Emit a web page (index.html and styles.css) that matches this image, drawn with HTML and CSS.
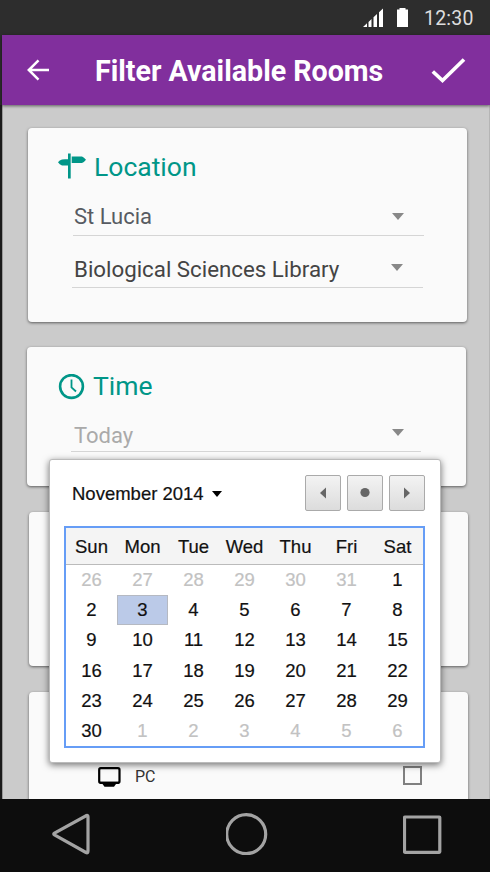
FILE: index.html
```html
<!DOCTYPE html>
<html lang="en">
<head>
<meta charset="utf-8">
<title>Filter Available Rooms</title>
<link rel="stylesheet" href="styles.css">
</head>
<body>
<div class="phone">
  <header class="status">
    <svg class="signal" width="21" height="19" viewBox="0 0 21 19"><path d="M0 19L4 15.200V19zM5.500 13.900L8.500 11V19H5.500zM10.500 9.300L14 6V19H10.500zM16 4.200L20 0.500V19H16z"/></svg>
    <svg class="battery" width="11" height="19" viewBox="0 0 11 19"><path d="M2.5 0H8.5V1.5H11V19H0V1.5H2.5z"/></svg>
    <span class="clock">12:30</span>
  </header>
  <div class="appbar">
    <svg class="back" width="22" height="22" viewBox="0 0 22 22"><path d="M22 11H2M11.5 1.3L1.8 11L11.5 20.7"/></svg>
    <h1 class="title">Filter Available Rooms</h1>
    <svg class="check" width="35" height="26" viewBox="0 0 35 26"><path d="M1.800 13.500L11.500 22.500L33 1.500"/></svg>
  </div>
  <main class="content">
    <section class="card location">
      <h2 class="heading">
        <svg class="sign-icon" width="28" height="26" viewBox="0 0 28 26"><path d="M10 0.500H12.700V25.500H10zM10 6V12.500H4Q1.500 11.500 0 9.300Q1.500 7.300 4 6.500zM13.700 3.500H24Q26 4.200 28 6.700Q26 9.300 24 10H13.700z"/></svg>
        <span class="location-label">Location</span>
      </h2>
      <div class="select campus"><span>St Lucia</span><i class="caret"></i></div>
      <div class="select building"><span>Biological Sciences Library</span><i class="caret"></i></div>
    </section>
    <section class="card time">
      <h2 class="heading">
        <svg class="clock-icon" width="28" height="26" viewBox="0 0 28 26"><circle cx="13.500" cy="12.500" r="11.400"/><path d="M13.500 5.500V13.300L18 17.500"/></svg>
        <span class="time-label">Time</span>
      </h2>
      <div class="select day"><span>Today</span><i class="caret"></i></div>
    </section>
    <section class="card middle"></section>
    <section class="card equipment">
      <label class="option">
        <svg width="23" height="20" viewBox="0 0 23 20"><rect x="1.200" y="1.200" width="20.300" height="14.600" rx="1.500"/><path d="M1 14.800H22L20.500 17H18L16 19.700H6.500L4.500 17H2.500z"/></svg>
        <span>PC</span><i class="checkbox"></i>
      </label>
    </section>
    <div class="picker">
      <div class="picker-head">
        <span class="month">November 2014</span><i class="month-caret"></i>
        <div class="buttons">
          <button><svg width="8" height="12" viewBox="0 0 8 12"><path d="M7 0.500V11.500L1 6z"/></svg></button>
          <button><svg width="10" height="12" viewBox="0 0 10 12"><circle cx="5" cy="5.500" r="4.600"/></svg></button>
          <button><svg width="8" height="12" viewBox="0 0 8 12"><path d="M1 0.500V11.500L7 6z"/></svg></button>
        </div>
      </div>
      <table class="days">
        <thead><tr><th>Sun</th><th>Mon</th><th>Tue</th><th>Wed</th><th>Thu</th><th>Fri</th><th>Sat</th></tr></thead>
        <tbody>
          <tr><td class="out">26</td><td class="out">27</td><td class="out">28</td><td class="out">29</td><td class="out">30</td><td class="out">31</td><td>1</td></tr>
          <tr><td>2</td><td class="selected">3</td><td>4</td><td>5</td><td>6</td><td>7</td><td>8</td></tr>
          <tr><td>9</td><td>10</td><td>11</td><td>12</td><td>13</td><td>14</td><td>15</td></tr>
          <tr><td>16</td><td>17</td><td>18</td><td>19</td><td>20</td><td>21</td><td>22</td></tr>
          <tr><td>23</td><td>24</td><td>25</td><td>26</td><td>27</td><td>28</td><td>29</td></tr>
          <tr><td>30</td><td class="out">1</td><td class="out">2</td><td class="out">3</td><td class="out">4</td><td class="out">5</td><td class="out">6</td></tr>
        </tbody>
      </table>
    </div>
  </main>
  <nav class="nav">
    <svg width="38" height="42" viewBox="0 0 38 42"><path d="M34.500 2.500Q36 2 36 4V38Q36 40.500 34 39.500L2.500 22Q1 21 2.500 20z"/></svg>
    <svg width="42" height="42" viewBox="0 0 42 42"><circle cx="20.200" cy="21.200" r="19.500"/></svg>
    <svg width="39" height="39" viewBox="0 0 39 39"><rect x="1.500" y="2" width="35.300" height="35.300" rx="0.500"/></svg>
  </nav>
</div>
</body>
</html>
```
FILE: styles.css
```css
* { box-sizing: border-box; }
body { margin: 0; background: #2d2d2d; font-family: Roboto, "Liberation Sans", sans-serif; }
svg { display: block; flex: none; }
.phone { width: 490px; height: 872px; display: flex; flex-direction: column; overflow: hidden; }

.status { height: 35px; flex: none; display: flex; padding: 8px 16px 0 0; justify-content: flex-end; background: #2d2d2d; }
.status svg { fill: #fff; }
.signal { margin-right: 13px; }
.battery { margin-right: 16px; }
.clock { width: 50px; font-size: 19.500px; line-height: 22px; letter-spacing: 0.200px; white-space: nowrap; color: #ddd; }

.appbar { position: relative; z-index: 1; height: 70px; flex: none; margin-left: 2px; display: flex; align-items: center; background: #812f9d; box-shadow: 0 1px 3px rgba(0,0,0,.55); }
.back { margin-left: 25px; fill: none; stroke: #fff; stroke-width: 2.500; }
.title { margin: 2px 0 0 46px; width: 290px; font-size: 28.600px; line-height: 34px; font-weight: 700; white-space: nowrap; color: #fff; }
.check { margin: 1px 0 0 46px; fill: none; stroke: #fff; stroke-width: 3.700; }

.content { position: relative; height: 694px; flex: none; overflow: hidden; padding: 23px 0 0 24px; background: #cbcbcb; border-left: 2px solid #1b1b1b; border-right: 1px solid #b5b5b5; box-shadow: inset 1px 0 #999; }
.card { width: 439px; background: #fafafa; border-radius: 4px; box-shadow: 0 1px 3px rgba(0,0,0,.55); }
.location { height: 194px; margin-left: 2px; padding: 23px 0 0 30px; }
.time { height: 139px; margin: 25px 0 0 1px; padding: 24px 0 0 31px; }
.middle { height: 154px; margin: 26px 0 0 3px; }
.equipment { height: 120px; margin: 26px 0 0 3px; padding: 74px 0 0 69px; }

.heading { display: flex; align-items: center; height: 32px; margin: 0; color: #009688; font-size: 26.500px; font-weight: 400; line-height: 32px; }
.heading svg { margin-right: 8px; fill: #009688; }
.heading .sign-icon { margin-top: -2px; }
.heading .clock-icon { margin-right: 7px; fill: none; stroke: #009688; stroke-width: 2.600; }
.heading .clock-icon path { stroke-width: 1.800; }
.time-label { margin-top: -2px; }
.select { width: 351px; display: flex; align-items: center; justify-content: space-between; padding: 2px 20px 0 1px; border-bottom: 1px solid #d5d5d5; font-size: 22px; white-space: nowrap; }
.caret { width: 0; height: 0; border: 6.500px solid transparent; border-top: 7px solid #888; border-bottom: 0; }
.campus { height: 40px; margin: 13px 0 0 15px; color: #575b62; }
.building { height: 40px; margin: 12px 0 0 14px; padding-left: 2px; color: #444; font-size: 22.300px; }
.building .caret { margin-top: -2px; }
.day { height: 40px; width: 350px; margin: 9px 0 0 13px; padding-right: 17px; color: #aaa; }
.day span { padding: 6px 0 0 2px; }

.option { display: flex; align-items: center; height: 20px; font-size: 16px; color: #333; }
.option svg { fill: none; stroke: #000; stroke-width: 2.200; margin: 1px 14px 0 0; }
.option path { fill: #000; stroke: none; }
.checkbox { width: 19px; height: 19px; margin: -2px 46px 0 auto; border: 2px solid #808080; }

.picker { position: absolute; left: 47px; top: 354px; width: 392px; height: 304px; padding: 14px 15px 0 17px; background: #fff; border: 1px solid #bbb; border-radius: 3px; box-shadow: 0 2px 7px rgba(0,0,0,.55); font-family: "Liberation Sans", sans-serif; color: #111; -webkit-text-stroke: 0.200px; }
.picker-head { height: 52px; display: flex; align-items: flex-start; }
.month { width: 132px; margin-left: 5px; font-size: 18.500px; line-height: 40px; white-space: nowrap; }
.month-caret { margin: 17px 0 0 8px; border: 5px solid transparent; border-top: 6px solid #000; border-bottom: 0; }
.buttons { display: flex; gap: 6px; margin: 1px 0 0 auto; }
.buttons button { width: 36px; height: 36px; padding: 0; display: flex; align-items: center; justify-content: center; border: 1px solid #aaa; border-radius: 2px; background: linear-gradient(#f3f3f3, #dcdcdc); }
.buttons svg { fill: #666; }
.days { width: 361px; height: 222px; table-layout: fixed; border-collapse: separate; border-spacing: 0; border: 2px solid #669df6; font-size: 18.500px; line-height: 28px; text-align: center; margin-left: -3px; }
.days th { height: 37px; padding: 2px 0 0; background: #f4f4f4; border-bottom: 1px solid #bbb; font-weight: 400; }
.days td { height: 30px; padding: 0; border: 1px solid transparent; }
.days .out { color: #c2c2c2; }
.days .selected { background: #bbcae8; border-color: #b5b9c2; }

.nav { height: 73px; flex: none; display: flex; align-items: center; justify-content: space-between; padding: 0 48px 3px 52px; background: #0d0d0d; }
.nav svg { fill: none; stroke: #a3a3a3; stroke-width: 3.200; }
```
